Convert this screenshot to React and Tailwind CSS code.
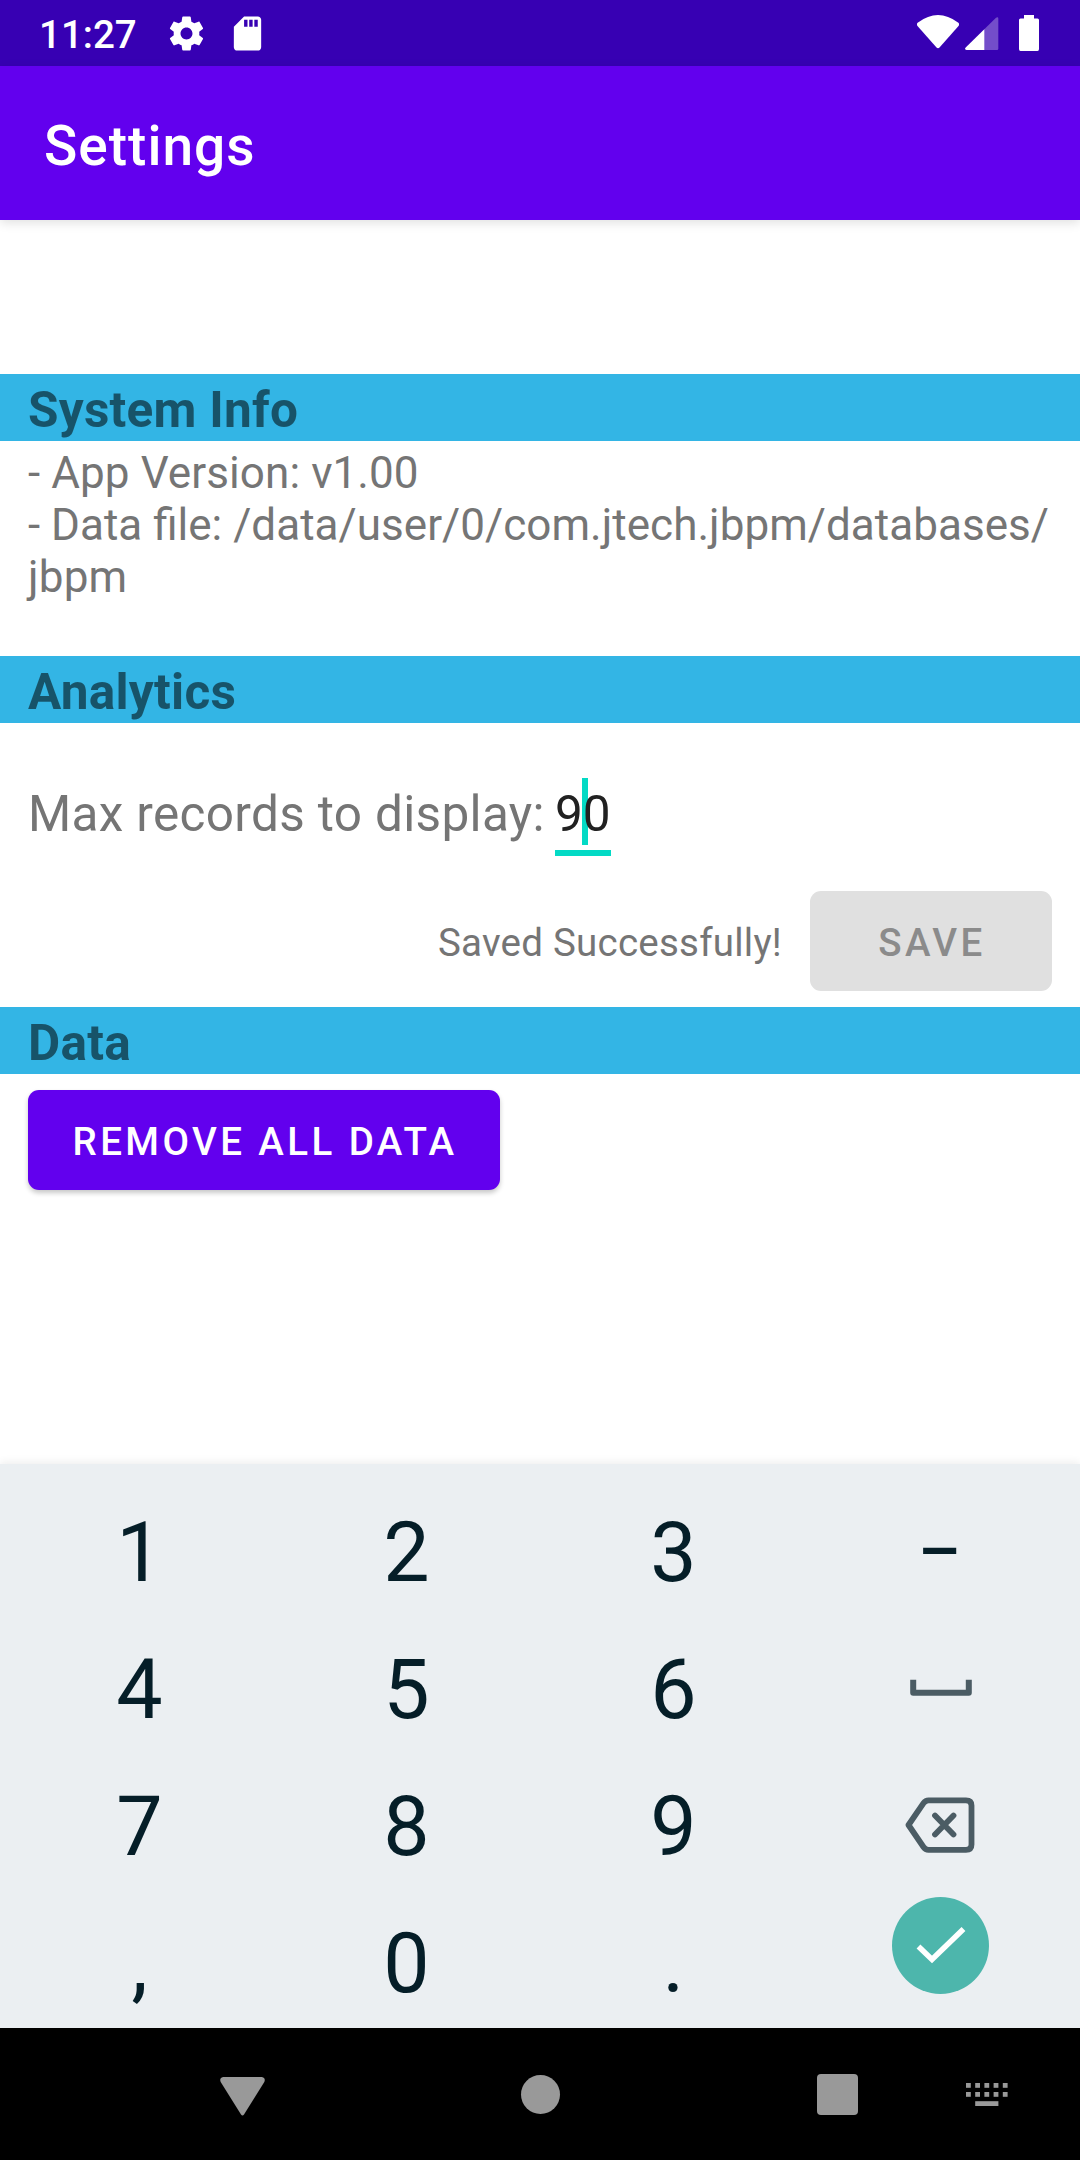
function StatusBar() {
  return (
    <div className="flex h-[66px] items-start bg-[#3700b3] text-white">
      <span className="ml-[39px] text-[38.5px] leading-[70px] font-medium">11:27</span>
      <svg className="mt-[13px] ml-[29px] h-[41px] w-[41px]" viewBox="0 0 24 24" fill="currentColor">
        <path d="M19.43 12.98c.04-.32.07-.64.07-.98s-.03-.66-.07-.98l2.11-1.65c.19-.15.24-.42.12-.64l-2-3.46c-.12-.22-.39-.3-.61-.22l-2.49 1c-.52-.4-1.08-.73-1.69-.98l-.38-2.65C14.46 2.18 14.25 2 14 2h-4c-.25 0-.46.18-.49.42l-.38 2.65c-.61.25-1.17.59-1.69.98l-2.49-1c-.23-.09-.49 0-.61.22l-2 3.46c-.13.22-.07.49.12.64l2.11 1.65c-.04.32-.07.65-.07.98s.03.66.07.98l-2.11 1.65c-.19.15-.24.42-.12.64l2 3.46c.12.22.39.3.61.22l2.49-1c.52.4 1.08.73 1.69.98l.38 2.65c.03.24.24.42.49.42h4c.25 0 .46-.18.49-.42l.38-2.65c.61-.25 1.17-.59 1.69-.98l2.49 1c.23.09.49 0 .61-.22l2-3.46c.12-.22.07-.49-.12-.64l-2.11-1.65zM12 15.5c-1.93 0-3.5-1.57-3.5-3.5s1.57-3.5 3.5-3.5 3.5 1.57 3.5 3.5-1.57 3.5-3.5 3.5z" />
      </svg>
      <svg className="mt-[13px] ml-5 h-[41px] w-[41px]" viewBox="0 0 24 24" fill="currentColor">
        <path d="M18 2h-8L4.02 8 4 20c0 1.1.9 2 2 2h12c1.100 0 2-.9 2-2V4c0-1.100-.9-2-2-2zm-6 6h-2V4h2v4zm3 0h-2V4h2v4zm3 0h-2V4h2v4z" />
      </svg>
      <svg className="mt-[15px] ml-auto h-[34px] w-[42px]" viewBox="0 0 42 34" fill="currentColor">
        <path d="M1 7.500Q21-7.500 41 7.500Q43 9 41.500 11L22.500 32.500Q21 34 19.500 32.500L.5 11Q-1 9 1 7.500z" />
      </svg>
      <svg className="mt-[17px] ml-[6px] h-[33px] w-[34px]" viewBox="0 0 34 33">
        <path d="M31 .7Q33.300-.5 33.300 1.500V31.500Q33.300 33 32 33H19V12.500z" fill="#fff" fillOpacity=".3" />
        <path d="M19.300 12.200V33H1.500Q-1 32.500.7 30.500z" fill="#fff" />
      </svg>
      <svg className="mt-[15px] mr-[41px] ml-[20px] h-9 w-5" viewBox="0 0 20 36" fill="currentColor">
        <path d="M5 0H15V3.500H18.500Q20 3.500 20 5V34Q20 36 18.500 36H1.500Q0 36 0 34V5Q0 3.500 1.500 3.500H5z" />
      </svg>
    </div>
  );
}

function SectionHeader({ children }) {
  return (
    <h2 className="h-[67px] bg-[#33b5e5] px-7 text-[49.5px] leading-[72px] font-bold tracking-[0.26px] text-black/54">
      {children}
    </h2>
  );
}

function Key({ children }) {
  return (
    <button className="flex h-[137px] items-center justify-center text-[82.5px] leading-[137px] text-[#051e28]">
      {children}
    </button>
  );
}

function Keyboard() {
  return (
    <div className="mt-auto h-[564px] bg-[#ebeff2] px-[6px] pt-[20px] shadow-[0_-2px_8px_rgba(0,0,0,0.07)]">
      <div className="grid grid-cols-4">
        <Key>1</Key>
        <Key>2</Key>
        <Key>3</Key>
        <Key>
          <span className="inline-block scale-x-[0.82]">–</span>
        </Key>
        <Key>4</Key>
        <Key>5</Key>
        <Key>6</Key>
        <Key>
          <svg className="mt-[-5px] h-[17px] w-[62px]" viewBox="0 0 62 17">
            <path d="M3.200 .8V13.800H58.800V.8" fill="none" stroke="#4b5c64" strokeWidth="6" strokeLinejoin="round" />
          </svg>
        </Key>
        <Key>7</Key>
        <Key>8</Key>
        <Key>9</Key>
        <Key>
          <svg className="mt-[-3px] mr-[2px] h-14 w-[70px]" viewBox="0 0 70 56" fill="none" stroke="#4b5c64" strokeWidth="5.800" strokeLinecap="round" strokeLinejoin="round">
            <path d="M3.500 28L18.500 6.200Q20.500 3.400 23.500 3.400H61Q66.500 3.400 66.500 8.500V47.500Q66.500 52.800 61 52.800H23.500Q20.500 52.800 18.500 50z" />
            <path d="M30 18.500L48.500 37.500M48.500 18.500L30 37.500" />
          </svg>
        </Key>
        <Key>,</Key>
        <Key>0</Key>
        <Key>.</Key>
        <Key>
          <span className="mt-[-37px] flex h-[97px] w-[97px] items-center justify-center rounded-full bg-[#4db6ac]">
            <svg className="h-[97px] w-[97px]" viewBox="0 0 97 97" fill="none" stroke="#fff" strokeWidth="5.500">
              <path d="M26.500 49.500L40 62.500L71.500 32" />
            </svg>
          </span>
        </Key>
      </div>
    </div>
  );
}

const KEY_DOTS = [0, 9.2, 18.4, 27.6, 36.8];

function NavigationBar() {
  return (
    <div className="flex h-[132px] items-center bg-black text-[#999]">
      <svg className="mt-[5px] ml-[220px] h-[39px] w-[45px]" viewBox="0 0 45 40" preserveAspectRatio="none" fill="currentColor">
        <path d="M3 0H42Q46 1 44.300 5L24 38.500Q22.500 40.500 21 38.500L.7 5Q-1 1 3 0z" />
      </svg>
      <span className="ml-[256px] h-[39px] w-[39px] rounded-full bg-[#999]" />
      <span className="ml-[257px] h-[41px] w-[41px] rounded-[4px] bg-[#999]" />
      <svg className="mt-px ml-[108px] h-[23px] w-[42px]" viewBox="0 0 42 23" fill="currentColor">
        {KEY_DOTS.map((x) => (
          <g key={x}>
            <rect x={x} y="0" width="4.800" height="4.800" />
            <rect x={x} y="9" width="4.800" height="4.800" />
          </g>
        ))}
        <rect x="9.200" y="18.200" width="23.200" height="4.800" />
      </svg>
    </div>
  );
}

export default function App() {
  return (
    <div className="flex h-[2160px] w-[1080px] flex-col overflow-hidden bg-white font-['Roboto',sans-serif] text-[#757575]">
      <StatusBar />
      <header className="h-[154px] bg-[#6200ee] pl-11 shadow-[0_3px_10px_rgba(0,0,0,0.12)]">
        <h1 className="text-[55px] leading-[160px] font-medium tracking-[1px] text-white">Settings</h1>
      </header>

      <main className="pt-[154px]">
        <SectionHeader>System Info</SectionHeader>
        <div className="h-[215px] px-7 pt-[6px] text-[44px] leading-[52px] whitespace-nowrap">
          <p className="tracking-[0.09px]">- App Version: v1.00</p>
          <p>
            - Data file: <span className="tracking-[0.04px]">/data/user/0/com.jtech.jbpm/databases/</span>
          </p>
          <p className="tracking-[0.2px]">jbpm</p>
        </div>

        <SectionHeader>Analytics</SectionHeader>
        <div className="flex h-[168px] items-start pt-[55px] pl-7 text-[49.5px] leading-[73px]">
          <label className="w-[527px] tracking-[0.33px] whitespace-nowrap">Max records to display:</label>
          <span className="relative h-[78px] w-14 border-b-[6px] border-[#03dac5] text-[#212121]">
            <span className="absolute top-0 left-[27px] h-[67px] w-[6px] bg-[#03dac5]" />
            <span className="relative">90</span>
          </span>
        </div>
        <div className="flex h-[116px] items-start justify-end pr-7 text-[38.5px] leading-[104px]">
          <span className="tracking-[0.23px]">Saved Successfully!</span>
          <button className="ml-7 h-[100px] w-[242px] rounded-[11px] bg-[#e0e0e0] pl-[2px] font-medium tracking-[0.0893em] text-[#8b8b8b]">
            SAVE
          </button>
        </div>

        <SectionHeader>Data</SectionHeader>
        <button className="mt-4 ml-7 h-[100px] w-[472px] rounded-[11px] bg-[#6200ee] pl-[2px] text-[38.5px] leading-[104px] font-medium tracking-[0.0885em] text-white shadow-[0_3px_5px_rgba(0,0,0,0.22)]">
          REMOVE ALL DATA
        </button>
      </main>

      <Keyboard />
      <NavigationBar />
    </div>
  );
}
